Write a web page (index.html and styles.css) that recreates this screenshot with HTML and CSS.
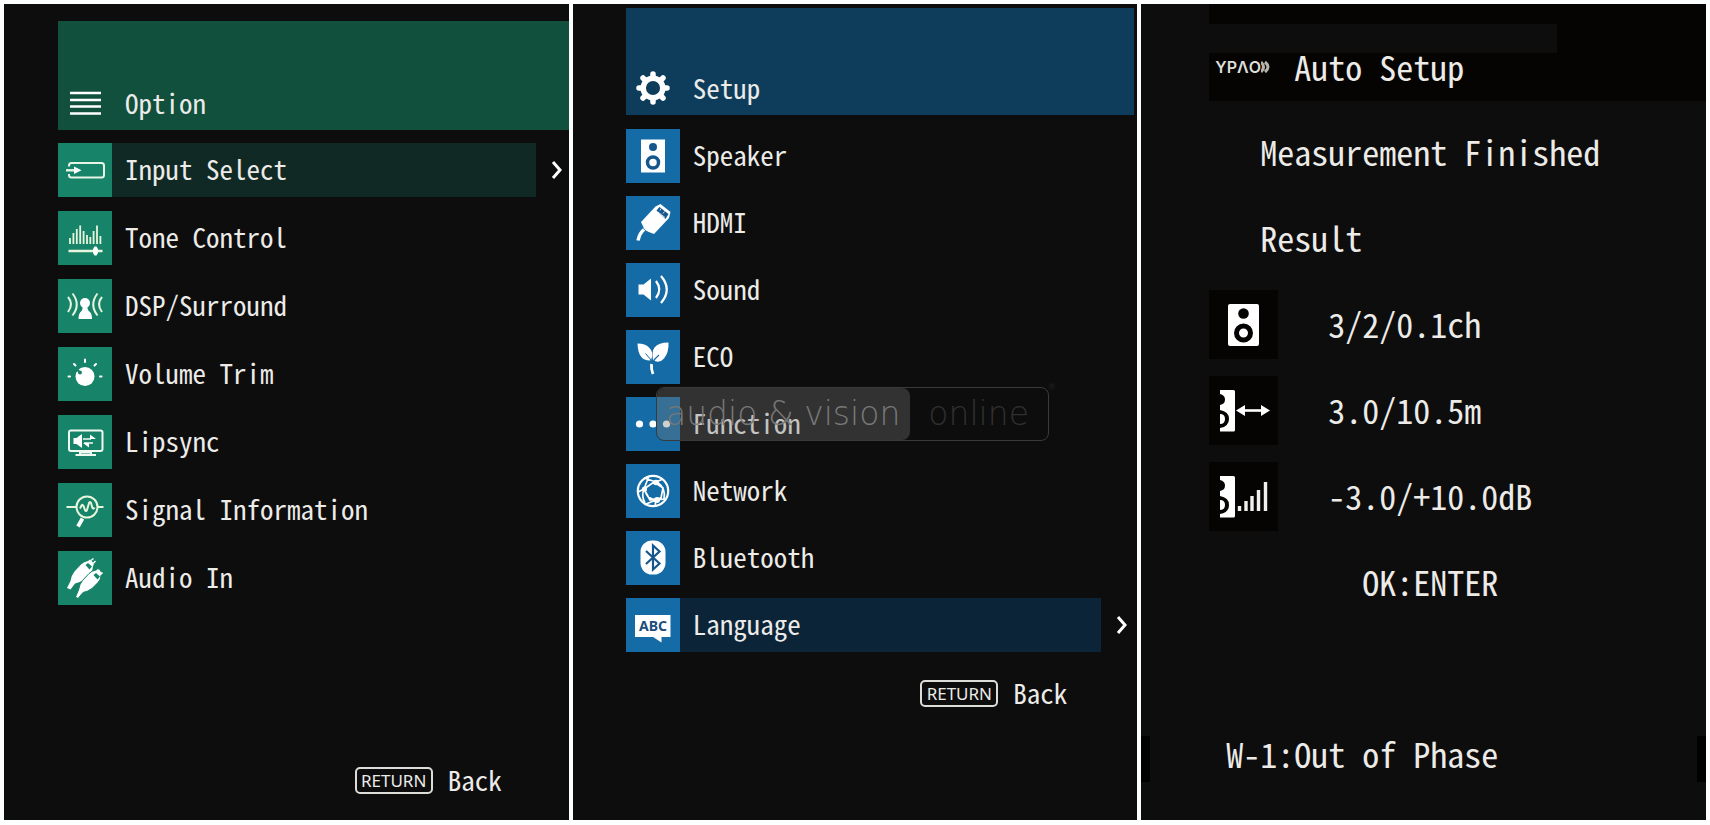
FILE: index.html
```html
<!DOCTYPE html>
<html lang="en">
<head>
  <meta charset="UTF-8" />
  <meta name="viewport" content="width=device-width, initial-scale=1.0"/>
  <title>Receiver Menus</title>
  <link rel="stylesheet" href="styles.css">
</head>

<body>
  <main class="screens">

    <!-- Option menu -->
    <section class="panel option">
      <header class="panel-header">
        <svg class="icon" viewBox="0 0 54 54" fill="none" stroke="#fff" stroke-width="2.4">
          <path d="M12 17h31M12 24h31M12 30.500h31M12 37.500h31"/>
        </svg>
        <h2>Option</h2>
      </header>

      <nav class="menu">
        <button class="menu-item selected">
          <svg class="icon" viewBox="0 0 54 54" fill="none" stroke="#e6f5e6" stroke-width="2">
            <path d="M11 23.500v-1q0-2.500 2.500-2.500h30q2.500 0 2.500 2.500v9.500q0 2.500-2.500 2.500h-30q-2.500 0-2.500-2.500v-1"/>
            <path d="M8 27.300h10" stroke-width="2.400"/>
            <path d="M16 23.500l7.500 3.800-7.500 3.800z" fill="#fff" stroke="none"/>
          </svg>
          <span class="label">Input Select</span>
          <svg class="chevron" viewBox="0 0 12 20"><path d="M2 2l7 8-7 8"/></svg>
        </button>
        <button class="menu-item">
          <svg class="icon" viewBox="0 0 54 54" fill="none" stroke="#e6f5dc" stroke-width="1.8">
            <path d="M12 33v-6M15.400 33V22M18.800 33V18M22.200 33V14.500M25.600 33V20M29 33v-9M32.300 33v-7M35.600 33V20M39 33V14.500M42.400 33v-8"/>
            <path d="M10.500 40h34" stroke-width="2.400"/>
            <path d="M35 38l1.500-2.500h2l1.500 2.500v4l-1.500 2.500h-2l-1.500-2.500z" fill="#fff" stroke="none"/>
          </svg>
          <span class="label">Tone Control</span>
        </button>
        <button class="menu-item">
          <svg class="icon" viewBox="0 0 54 54" fill="none" stroke="#e6f5dc" stroke-width="2">
            <path d="M10 18q6 7 0 15M14.500 14.500q8.500 11 0 22M44 18q-6 7 0 15M39.500 14.500q-8.500 11 0 22"/>
            <g fill="#fff" stroke="none">
              <circle cx="27" cy="24" r="5"/>
              <path d="M24.500 27h5q-.5 4 2.500 6 2 2 2 7H20.500q0-5 2-7 2.500-2 2-6z"/>
            </g>
          </svg>
          <span class="label">DSP/Surround</span>
        </button>
        <button class="menu-item">
          <svg class="icon" viewBox="0 0 54 54" fill="none" stroke="#fff" stroke-width="2" stroke-linecap="round">
            <circle cx="27" cy="29.500" r="9.500" fill="#fff" stroke="none"/>
            <circle cx="22" cy="25.500" r="2" fill="#178469" stroke="none"/>
            <path d="M18.500 22l3 3" stroke="#178469" stroke-width="2.400"/>
            <path d="M27 12.500v2.500M16 17l1.500 1.500M38 17l-1.500 1.500M10.500 29.500h1.500M42 29.500h1.500"/>
          </svg>
          <span class="label">Volume Trim</span>
        </button>
        <button class="menu-item">
          <svg class="icon" viewBox="0 0 54 54" fill="none" stroke="#f0faf0" stroke-width="2">
            <rect x="11" y="15.500" width="33.500" height="20.500" rx="2"/>
            <path d="M22 37h11v2.500h-11zM17.500 40h20.500"/>
            <path d="M25 24h8M26 28h9" stroke-width="1.600"/>
            <path d="M15.500 23h3l5.500-4v14l-5.500-4h-3zM32 19.500l6 4.500h-6zM31 32.500l-6-4.500h6z" fill="#fff" stroke="none"/>
          </svg>
          <span class="label">Lipsync</span>
        </button>
        <button class="menu-item">
          <svg class="icon" viewBox="0 0 54 54" fill="none" stroke="#e6f5dc" stroke-width="2">
            <circle cx="29" cy="24" r="10.500"/>
            <path d="M8.500 24h10M39.500 24h6M22 25.500l1.500-3q1-1.500 2 .5l1.500 4q1 2 2 0l2-7q1-2 2 0l1.500 5q1 1.500 2-.5"/>
            <path d="M24.500 35.500l-4.500 8" stroke="#fff" stroke-width="3.800"/>
          </svg>
          <span class="label">Signal Information</span>
        </button>
        <button class="menu-item">
          <svg class="icon" viewBox="0 0 54 54" fill="#fff">
            <path d="M9 37l3.500-7q1-6 4-9.500l6.500-7q3-3 7-3.500l2-1.500 4 4-1 3q0 4-3 7l-6 6q-4 3-9 4l-4.500 6z"/>
            <path d="M27.500 14l2.500-2 4 3.500-2.500 3z" fill="#178469"/>
            <path d="M33 9.500l2.500-2M35.500 12l2-2" stroke="#fff" stroke-width="1.500"/>
            <path d="M17.500 46l3-7q1-6 4-9.500l6.500-7q3-3 7-3.500l2-1.500 4 4-1 3q0 4-3 7l-6 6q-4 3-9 4l-5 6z" stroke="#178469" stroke-width="1"/>
            <path d="M35.500 24l2.500-2 4 3.500-2.500 3z" fill="#178469"/>
            <path d="M40 21l1.500-2M42.500 23.500l2-2" stroke="#fff" stroke-width="1.500"/>
          </svg>
          <span class="label">Audio In</span>
        </button>
      </nav>

      <button class="back"><span class="key">RETURN</span>Back</button>
    </section>

    <!-- Setup menu -->
    <section class="panel setup">
      <header class="panel-header">
        <svg class="icon" viewBox="0 0 54 54" fill="none" stroke="#fff">
          <circle cx="27" cy="27" r="9.800" stroke-width="5.500"/>
          <path d="M27 15v-2M27 39v2M15 27h-2M39 27h2M18.500 18.500l-1.500-1.500M35.500 35.500l1.500 1.500M18.500 35.500l-1.500 1.500M35.500 18.500l1.500-1.500" stroke-width="5.500" stroke-linecap="round"/>
        </svg>
        <h2>Setup</h2>
      </header>

      <nav class="menu">
        <button class="menu-item">
          <svg class="icon" viewBox="0 0 54 54">
            <rect x="15" y="10.500" width="24" height="33" fill="#fff"/>
            <circle cx="27" cy="18" r="4" fill="#15578c"/>
            <circle cx="27" cy="33.500" r="5.500" fill="none" stroke="#15578c" stroke-width="3.500"/>
          </svg>
          <span class="label">Speaker</span>
        </button>
        <button class="menu-item">
          <svg class="icon" viewBox="0 0 54 54" fill="#fff">
            <path d="M15 26l14.500-15.500 5-2.500 10 8-1.500 6-15 16-9-3.500z"/>
            <path d="M18.500 33q-5 4-6.500 11.500" fill="none" stroke="#fff" stroke-width="3.500"/>
            <path d="M15.500 31l7 6" stroke="#146ba5" stroke-width=".8"/>
            <path d="M30.500 14.500l3-3.500 9 7-3 5z" fill="#15578c"/>
            <path d="M32 16l7 5.500M35 12.500l-1 2M38.500 15.500l-1.500 2" stroke="#fff" stroke-width=".8"/>
          </svg>
          <span class="label">HDMI</span>
        </button>
        <button class="menu-item">
          <svg class="icon" viewBox="0 0 54 54" fill="none" stroke="#fff" stroke-width="2.300">
            <path d="M12.500 21.500h5l7.500-6v22l-7.500-6h-5z" fill="#fff" stroke="none"/>
            <path d="M30 18q6.500 8.500 0 17M35 13q11.500 13.500 0 27"/>
          </svg>
          <span class="label">Sound</span>
        </button>
        <button class="menu-item">
          <svg class="icon" viewBox="0 0 54 54" fill="#fff">
            <path d="M11.500 13.500q8 0 11.500 4 4 4 3 9l-1 4q-13 1-13.500-17z"/>
            <path d="M42.500 12.500q-10 0-14 5-3 4-1.500 13 7 3 11-2 5-6 4.500-16z"/>
            <path d="M19.500 23.500q6 5 7 12l.5 8.500" fill="none" stroke="#146ba5" stroke-width="1"/>
            <path d="M33 25q-5 4-6.500 8" fill="none" stroke="#146ba5" stroke-width="1.200"/>
            <path d="M25.500 34q-.5 5 1.500 10" fill="none" stroke="#fff" stroke-width="2.800"/>
          </svg>
          <span class="label">ECO</span>
        </button>
        <button class="menu-item">
          <svg class="icon" viewBox="0 0 54 54" fill="#fff">
            <circle cx="13.500" cy="27" r="3.600"/>
            <circle cx="27" cy="27" r="3.600"/>
            <circle cx="40.500" cy="27" r="3.600"/>
          </svg>
          <span class="label">Function</span>
        </button>
        <button class="menu-item">
          <svg class="icon" viewBox="0 0 54 54" fill="none" stroke="#fff" stroke-width="1.700">
            <circle cx="27" cy="27" r="15.200" stroke-width="2.200"/>
            <path d="M18 25l10-7 9 6-2 10-11 2zM30 18l-12-4M30 18l7-3M18 25l-6 3M18 25l5-13M31 18q9 6 7 17M19 25q0 9 11 11M30 36l9-1M30 36l-10 4M30 36l-1 6M18 25q-3 7 1 14"/>
            <g fill="#fff" stroke="none">
              <circle cx="30" cy="18.500" r="2.800"/>
              <circle cx="18.500" cy="25" r="2.600"/>
              <circle cx="31" cy="36" r="3"/>
            </g>
          </svg>
          <span class="label">Network</span>
        </button>
        <button class="menu-item">
          <svg class="icon" viewBox="0 0 54 54">
            <rect x="14.500" y="9.500" width="25" height="34" rx="11.500" fill="#fff"/>
            <path d="M20 20l13.500 12.500-6.500 6V14.500l6.500 6L20 33" fill="none" stroke="#15578c" stroke-width="2.200"/>
          </svg>
          <span class="label">Bluetooth</span>
        </button>
        <button class="menu-item selected">
          <svg class="icon" viewBox="0 0 54 54">
            <path d="M9 17h35.500v22H35.500v5.500L27 39H9z" fill="#fff"/>
            <text class="abc" x="27" y="33" text-anchor="middle">ABC</text>
          </svg>
          <span class="label">Language</span>
          <svg class="chevron" viewBox="0 0 12 20"><path d="M2 2l7 8-7 8"/></svg>
        </button>
      </nav>

      <button class="back"><span class="key">RETURN</span>Back</button>

      <div class="watermark">
        <span class="mark-main">audio &amp; vision</span>
        <span class="mark-side">online</span>
        <span class="mark-reg">®</span>
      </div>
    </section>

    <!-- Auto setup result -->
    <section class="panel result">
      <header class="result-header">
        <div class="strip"></div>
        <div class="result-title">
          <span class="ypao">YPΛO<svg viewBox="0 0 10 14" fill="none" stroke="#b4b4ae" stroke-width="3"><path d="M0 2q5 5 0 10M4 2q6 5 0 10"/></svg></span>
          <h2>Auto Setup</h2>
        </div>
      </header>

      <p class="line indent">Measurement Finished</p>
      <p class="line indent">Result</p>

      <div class="line">
        <svg class="tile" viewBox="0 0 69 69">
          <rect x="19" y="14" width="31" height="42" rx="2" fill="#fff"/>
          <circle cx="34.500" cy="23.500" r="5.300" fill="#050403"/>
          <circle cx="34.500" cy="43" r="7" fill="none" stroke="#050403" stroke-width="5"/>
        </svg>
        <span>3/2/0.1ch</span>
      </div>
      <div class="line">
        <svg class="tile" viewBox="0 0 69 69">
          <path d="M11 14h13.500q1.500 0 1.500 1.500v38.500q0 1.500-1.500 1.500H11v-3.500q9-1.500 9-9t-9-9v-5q5-1 5-5.500t-5-5.500z" fill="#fff"/>
          <path d="M11 38q5 0 5 5t-5 5z" fill="#fff"/>
          <path d="M34 34.500h20" stroke="#fff" stroke-width="2.600"/>
          <path d="M27 34.500l9-5.500v11zM61 34.500l-9-5.500v11z" fill="#fff"/>
        </svg>
        <span>3.0/10.5m</span>
      </div>
      <div class="line">
        <svg class="tile" viewBox="0 0 69 69">
          <path d="M11 14h13.500q1.500 0 1.500 1.500v38.500q0 1.500-1.500 1.500H11v-3.500q9-1.500 9-9t-9-9v-5q5-1 5-5.500t-5-5.500z" fill="#fff"/>
          <path d="M11 38q5 0 5 5t-5 5z" fill="#fff"/>
          <path d="M30.500 49v-5M37 49v-10M43 49V34M49.500 49V28M56.500 49V20" fill="none" stroke="#f0f0ec" stroke-width="3.400"/>
        </svg>
        <span>-3.0/+10.0dB</span>
      </div>

      <button class="line confirm">OK:ENTER</button>
      <p class="line warning">W-1:Out of Phase</p>
    </section>

  </main>
</body>
</html>
```

FILE: styles.css
```css
* {
  box-sizing: border-box;
}

body {
  margin: 0;
  background: #fcfffd;
  color: #ecebe8;
  font-family: "Noto Sans Mono CJK JP", "Noto Sans CJK JP", monospace;
  font-feature-settings: "hwid";
  font-size: 27px;
}

h2, p {
  margin: 0;
  font-size: inherit;
  font-weight: normal;
}

button {
  background: none;
  border: none;
  padding: 0;
  color: inherit;
  font: inherit;
  font-feature-settings: inherit;
  text-align: left;
  cursor: pointer;
}

.screens {
  display: grid;
  grid-template-columns: repeat(3, 1fr);
  gap: 4px;
  min-height: 100vh;
  padding: 4px 4px 5px;
}

.panel {
  position: relative;
  display: flex;
  flex-direction: column;
  background: #0d0d0d;
}

.option {
  padding: 17px 0 20px 54px;
}

.setup {
  padding: 4px 3px 0 53px;
}

/* Menu header */
.panel-header {
  display: flex;
  align-items: flex-end;
  height: 109px;
  margin-bottom: 13px;
  line-height: 54px;
}

.option .panel-header {
  background: #10503c;
}

.setup .panel-header {
  height: 107px;
  margin-bottom: 14px;
  background: #0e3d5c;
}

.panel-header h2 {
  padding-left: 13px;
}

.icon {
  display: block;
  flex: none;
  width: 54px;
  height: 54px;
}

/* Menu rows */
.menu {
  display: flex;
  flex-direction: column;
  gap: 14px;
}

.setup .menu {
  gap: 13px;
}

.menu-item {
  display: flex;
  align-items: center;
  width: 100%;
  line-height: 52px;
}

.option .icon {
  background: #178469;
}

.setup .icon {
  background: #146ba5;
}

.panel .panel-header .icon {
  background: none;
}

.label {
  flex: 1;
  padding: 0 0 2px 13px;
}

.option .selected .label {
  background: #112924;
}

.setup .selected .label {
  background: #0b2438;
}

.chevron {
  width: 12px;
  height: 20px;
  margin: 0 6px 0 15px;
  fill: none;
  stroke: #fff;
  stroke-width: 3;
}

.abc {
  fill: #1c4d7c;
  font-family: "Noto Sans", sans-serif;
  font-size: 14px;
  font-weight: 700;
}

/* Return key hint */
.back {
  display: flex;
  align-items: center;
  align-self: flex-end;
  gap: 15px;
  margin-right: 67px;
  line-height: 40px;
}

.option .back {
  margin-top: auto;
}

.setup .back {
  margin-top: 21px;
}

.key {
  width: 78px;
  border: 2px solid #dcdcd8;
  border-radius: 5px;
  font-family: "Noto Sans", sans-serif;
  font-size: 17px;
  line-height: 23px;
  text-align: center;
}

/* Watermark over the setup menu */
.watermark {
  position: absolute;
  top: 383px;
  left: 83px;
  display: flex;
  border: 1px solid #3a3a3a;
  border-radius: 8px;
  color: #303030;
  font-family: "DejaVu Sans", sans-serif;
  font-size: 33px;
  font-weight: 200;
  line-height: 52px;
  white-space: nowrap;
  pointer-events: none;
}

.mark-main {
  width: 253px;
  border-radius: 8px;
  background: rgba(120, 120, 120, 0.35);
  color: #787878;
  text-align: center;
}

.mark-side {
  width: 138px;
  text-align: center;
}

.mark-reg {
  position: absolute;
  top: -5px;
  right: -8px;
  font-size: 8px;
  line-height: 10px;
}

/* Auto setup result */
.result {
  padding-left: 68px;
  font-size: 34px;
}

.result-header {
  height: 97px;
  margin-bottom: 7px;
  padding-top: 20px;
  background: #050403;
}

.strip {
  width: 70%;
  height: 29px;
  background: #0d0d0d;
}

.result-title {
  display: flex;
  align-items: center;
  gap: 20px;
  padding-left: 6px;
  line-height: 26px;
}

.ypao {
  display: flex;
  align-items: center;
  width: 59px;
  color: #dededa;
  font-family: "Inter", sans-serif;
  font-size: 16px;
  font-weight: 600;
  line-height: 28px;
}

.ypao svg {
  flex: none;
  width: 10px;
  height: 14px;
}

.line {
  display: flex;
  align-items: center;
  gap: 50px;
  height: 86px;
}

.indent {
  padding-left: 51px;
}

.tile {
  width: 69px;
  height: 69px;
  margin-top: 3px;
  background: #050403;
}

.confirm {
  padding-left: 153px;
}

.warning {
  margin-top: 86px;
  padding-left: 17px;
}

/* Black notches on both edges */
.result::before,
.result::after {
  content: "";
  position: absolute;
  top: 732px;
  width: 9px;
  height: 46px;
  background: #000;
}

.result::before {
  left: 0;
}

.result::after {
  right: 0;
}
```
